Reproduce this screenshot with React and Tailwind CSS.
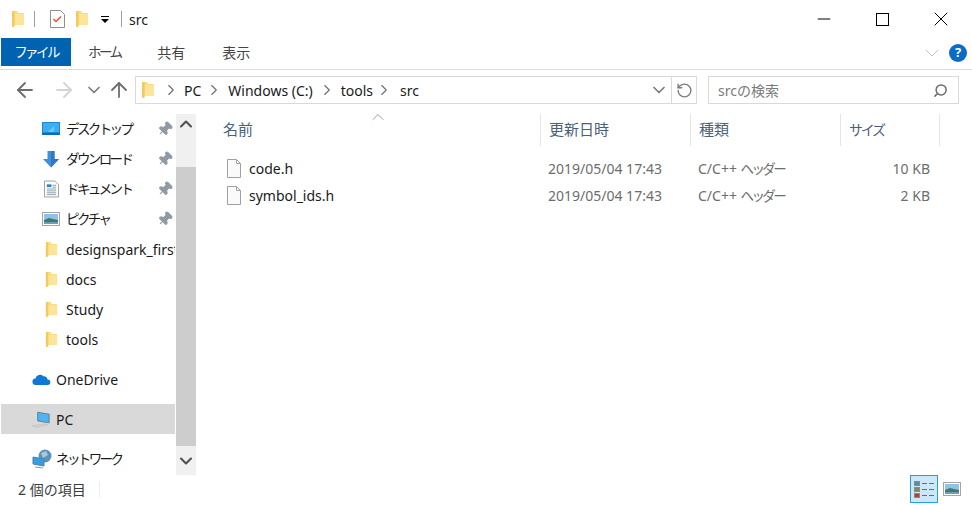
import { ChevronDown, ChevronUp, ChevronRight, ArrowLeft, ArrowRight, ArrowUp, RotateCw, Search, X, Minus, Pin } from "lucide-react";

const FONT = "font-['Noto_Sans','Noto_Sans_CJK_JP',sans-serif]";
// kana in the original font is condensed
const KANA = "text-[13.5px] tracking-[-2.6px]";

function FolderIcon({ className = "" }) {
  return (
    <svg viewBox="0 0 14 18" className={className}>
      <path d="M1 1h5l1 2h6v12H4l-1 2H1z" fill="#fbdc80" />
      <path d="M1 1h2.500v15L1 17z" fill="#f4c95e" />
      <path d="M4 4h9v11H4z" fill="#fde49a" />
    </svg>
  );
}

function FileIcon() {
  return (
    <svg viewBox="0 0 16 19" className="w-4 h-[19px]">
      <path d="M1.500.500h9l4 4v14h-13z" fill="#fafafa" stroke="#a0a0a0" />
      <path d="M10.500.500v4h4" fill="none" stroke="#a0a0a0" />
    </svg>
  );
}

function DesktopIcon() {
  return (
    <svg viewBox="0 0 18 14" className="w-[18px] h-[14px]">
      <rect width="18" height="13" fill="#1e88d8" />
      <path d="M1 1h16v9H1z" fill="#3eaef0" />
      <path d="M6 10l6-6v6z" fill="#6cc6f5" />
      <rect y="11" width="18" height="2" fill="#0f6cb5" />
    </svg>
  );
}

function DownloadIcon() {
  return (
    <svg viewBox="0 0 18 17" className="w-[18px] h-[17px]">
      <path d="M5.500 0h7v8H17l-8 8.500-8-8.500h4.500z" fill="#3f8fdc" />
      <path d="M9 0h3.500v8H17l-8 8.500z" fill="#2f78c4" />
    </svg>
  );
}

function DocumentIcon() {
  return (
    <svg viewBox="0 0 16 18" className="w-[15px] h-[18px]">
      <path d="M.500.500h11l4 4v13H.500z" fill="#fff" stroke="#9a9a9a" />
      <path d="M3 4h5v3H3z" fill="#2a86d0" />
      <path d="M3 9h10M3 11h10M3 13h10M3 15h10M9 5h4M9 7h4" stroke="#8a9aa8" />
    </svg>
  );
}

function PictureIcon() {
  return (
    <svg viewBox="0 0 18 14" className="w-[18px] h-[14px]">
      <rect x=".5" y=".5" width="17" height="13" fill="#fff" stroke="#a4a4a4" />
      <rect x="2" y="2" width="14" height="10" fill="#8fc2e8" />
      <path d="M2 8l5-2 4 1 5 1v4H2z" fill="#3f7a6a" />
      <path d="M2 10h14v2H2z" fill="#6f9fb8" />
    </svg>
  );
}

function CloudIcon() {
  return (
    <svg viewBox="0 0 20 14" className="w-[19px] h-[13px]">
      <path d="M4 13a3.500 3.500 0 0 1-.5-7A5 5 0 0 1 12 3.500 3.800 3.800 0 0 1 16.500 7 3 3 0 0 1 16.500 13z" fill="#0f78d4" />
    </svg>
  );
}

function PcIcon() {
  return (
    <svg viewBox="0 0 22 20" className="w-[22px] h-[20px]">
      <path d="M7 3l12 2v9L7 12z" fill="#4eb4f2" stroke="#5c7f96" />
      <path d="M1 17l13-2 4 1-13 3z" fill="#d0d0d0" stroke="#bcbcbc" strokeWidth=".5" />
    </svg>
  );
}

function NetworkIcon() {
  return (
    <svg viewBox="0 0 20 20" className="w-5 h-5">
      <circle cx="13" cy="7" r="6.500" fill="#5b93bd" />
      <path d="M9 4l5-2 2 4-5 3z" fill="#a9c8dc" />
      <path d="M1 8l11 2v7L1 15z" fill="#2f9fe6" stroke="#5a7f98" />
      <path d="M3 18l8 1" stroke="#8a9aa6" />
    </svg>
  );
}

function CheckDocIcon() {
  return (
    <svg viewBox="0 0 15 18" className="w-[15px] h-[18px]">
      <path d="M.500.500h10l4 4v13H.500z" fill="#fff" stroke="#8f8f8f" />
      <path d="M3.500 9l2.500 2.500 5-5" fill="none" stroke="#e0562a" strokeWidth="1.500" />
    </svg>
  );
}

function QatArrow() {
  return (
    <svg viewBox="0 0 8 7" className="w-2 h-[7px]">
      <path d="M0 0h8v1H0zM0 3h8L4 7z" fill="#000" />
    </svg>
  );
}

function NavRow({ icon, label, pinned, kana, indent = true, selected }) {
  return (
    <div className={`flex items-center h-[30px] ${selected ? "bg-[#d9d9d9]" : ""} ${indent ? "pl-[41px]" : "pl-[30px]"}`}>
      <span className={`flex items-center justify-center shrink-0 ${indent ? "w-[18px] mr-1.5" : "w-[21px] mr-1"}`}>{icon}</span>
      <span className={`text-[#1a1a1a] whitespace-nowrap overflow-hidden flex-1 ${kana ? KANA : "text-[14px]"}`}>{label}</span>
      {pinned && <Pin className="w-4 h-4 mr-[2px] ml-1 text-[#8f9aa3] fill-[#8f9aa3] rotate-45 shrink-0" strokeWidth={1.500} />}
    </div>
  );
}

function FileRow({ name, size }) {
  return (
    <div className="grid grid-cols-[344px_150px_150px_100px] h-[27px] items-center text-[14px] text-[#6d6d6d]">
      <div className="flex items-center pl-[30px] gap-[7px]">
        <FileIcon />
        <span className="text-[#1a1a1a]">{name}</span>
      </div>
      <span className="pl-2">2019/05/04 17:43</span>
      <span className="pl-2 whitespace-nowrap">C/C++ <span className={KANA}>ヘッダー</span></span>
      <span className="text-right pr-2.5">{size}</span>
    </div>
  );
}

export default function App() {
  return (
    <div className={`w-[972px] h-[505px] bg-white flex flex-col overflow-hidden ${FONT}`}>
      {/* title bar */}
      <div className="h-[38px] flex items-center shrink-0">
        <FolderIcon className="w-3.5 h-[18px] ml-[11px]" />
        <div className="w-px h-4 bg-[#a0a0a0] ml-[9px]" />
        <div className="ml-[15px] flex"><CheckDocIcon /></div>
        <FolderIcon className="w-3.5 h-[18px] ml-[10px]" />
        <div className="ml-[12px] flex"><QatArrow /></div>
        <div className="w-px h-4 bg-[#a0a0a0] ml-[12px]" />
        <span className="ml-[7px] text-[14px] text-[#1a1a1a]">src</span>
        <div className="ml-auto flex items-center">
          <Minus className="w-5 h-5 mr-[42px] text-black" strokeWidth={1.300} />
          <div className="w-[13px] h-[13px] border border-black mr-[40px]" />
          <X className="w-6 h-6 mr-[19px] text-black" strokeWidth={1} />
        </div>
      </div>

      {/* ribbon tabs */}
      <div className="h-[32px] shrink-0 flex items-start border-b border-[#dadbdc] text-[14px] text-[#444444] pl-px">
        <div className={`w-[70px] h-[28px] bg-[#0063b1] text-white flex items-center justify-center ${KANA}`}>ファイル</div>
        <span className={`ml-[17px] h-[28px] flex items-center ${KANA}`}>ホーム</span>
        <span className="ml-[37px] h-[28px] flex items-center">共有</span>
        <span className="ml-[37px] h-[28px] flex items-center">表示</span>
        <div className="ml-auto h-[28px] mt-px flex items-center pr-[5px]">
          <ChevronDown className="w-6 h-6 text-[#c0c0c0] mr-[5px]" strokeWidth={1} />
          <div className="w-[18px] h-[18px] rounded-full bg-[#0a6cc4] text-white text-[13px] font-bold flex items-center justify-center">?</div>
        </div>
      </div>

      {/* address bar */}
      <div className="h-[40px] shrink-0 flex items-center text-[14px]">
        <ArrowLeft className="w-6 h-6 ml-[13px] text-[#6d6d6d]" strokeWidth={1.800} />
        <ArrowRight className="w-6 h-6 ml-[15px] text-[#d4d4d4]" strokeWidth={1.800} />
        <ChevronDown className="w-5 h-5 ml-[8px] text-[#7a7a7a]" strokeWidth={2} />
        <ArrowUp className="w-6 h-6 ml-[3px] text-[#6d6d6d]" strokeWidth={1.800} />
        <div className="ml-[4px] w-[562px] h-[28px] border border-[#d9d9d9] flex items-center text-[#1a1a1a]">
          <FolderIcon className="w-3.5 h-[18px] ml-[5px]" />
          <ChevronRight className="w-[18px] h-[18px] ml-[7px] text-[#6d6d6d]" strokeWidth={1.500} />
          <span className="ml-[4px]">PC</span>
          <ChevronRight className="w-[18px] h-[18px] ml-[4px] text-[#6d6d6d]" strokeWidth={1.500} />
          <span className="ml-[5px]">Windows (C:)</span>
          <ChevronRight className="w-[18px] h-[18px] ml-[5px] text-[#6d6d6d]" strokeWidth={1.500} />
          <span className="ml-[5px]">tools</span>
          <ChevronRight className="w-[18px] h-[18px] ml-[2px] text-[#6d6d6d]" strokeWidth={1.500} />
          <span className="ml-[7px]">src</span>
          <div className="ml-auto flex items-center h-full">
            <ChevronDown className="w-5 h-5 mr-[2px] text-[#7a7a7a]" strokeWidth={2} />
            <div className="w-px h-full bg-[#d9d9d9]" />
            <RotateCw className="w-[17px] h-[17px] ml-[4px] mr-[3px] text-[#7d7d7d] -scale-x-100" strokeWidth={2} />
          </div>
        </div>
        <div className="ml-[11px] w-[251px] h-[28px] border border-[#d9d9d9] flex items-center pl-[9px] pr-[10px] text-[#7a7a7a]">
          <span>srcの検索</span>
          <Search className="w-[15px] h-[15px] ml-auto text-[#6d6d6d] -scale-x-100" strokeWidth={2.400} />
        </div>
      </div>

      {/* body */}
      <div className="flex flex-1 min-h-0 pt-[4px]">
        <div className="w-[174px] ml-px shrink-0 overflow-hidden">
          <NavRow icon={<DesktopIcon />} label="デスクトップ" kana pinned />
          <NavRow icon={<DownloadIcon />} label="ダウンロード" kana pinned />
          <NavRow icon={<DocumentIcon />} label="ドキュメント" kana pinned />
          <NavRow icon={<PictureIcon />} label="ピクチャ" kana pinned />
          <NavRow icon={<FolderIcon className="w-[13px] h-[17px]" />} label="designspark_first" />
          <NavRow icon={<FolderIcon className="w-[13px] h-[17px]" />} label="docs" />
          <NavRow icon={<FolderIcon className="w-[13px] h-[17px]" />} label="Study" />
          <NavRow icon={<FolderIcon className="w-[13px] h-[17px]" />} label="tools" />
          <div className="h-[10px]" />
          <NavRow icon={<CloudIcon />} label="OneDrive" indent={false} />
          <div className="h-[10px]" />
          <NavRow icon={<PcIcon />} label="PC" indent={false} selected />
          <div className="h-[10px]" />
          <NavRow icon={<NetworkIcon />} label="ネットワーク" kana indent={false} />
        </div>

        {/* nav scrollbar */}
        <div className="w-[20px] bg-[#f0f0f0] shrink-0 ml-px flex flex-col">
          <div className="h-[53px] flex justify-center">
            <ChevronUp className="w-5 h-5 text-[#505050]" strokeWidth={2.500} />
          </div>
          <div className="flex-1 bg-[#cdcdcd]" />
          <div className="h-[29px] flex items-center justify-center">
            <ChevronDown className="w-5 h-5 text-[#505050]" strokeWidth={2.500} />
          </div>
        </div>

        {/* file list */}
        <div className="flex-1 min-w-0">
          <div className="grid grid-cols-[344px_150px_150px_100px] h-[32px] text-[15px] text-[#4c607a] relative">
            <span className="pl-[27px] pb-px flex items-center">名前</span>
            <span className="pl-2 pb-px flex items-center border-l border-[#e5e5e5]">更新日時</span>
            <span className="pl-2 pb-px flex items-center border-l border-[#e5e5e5]">種類</span>
            <span className="pl-2 pb-px flex items-center border-x border-[#e5e5e5]">
              <span className="text-[14px] tracking-[-2.300px]">サイズ</span>
            </span>
            <ChevronUp className="absolute left-[172px] -top-[7px] w-5 h-5 text-[#8a8a8a]" strokeWidth={1} />
          </div>
          <div className="pt-[9px]">
            <FileRow name="code.h" size="10 KB" />
            <FileRow name="symbol_ids.h" size="2 KB" />
          </div>
        </div>
      </div>

      {/* status bar */}
      <div className="h-[30px] shrink-0 flex items-center pb-[2px] text-[14px] text-[#3c3c3c]">
        <span className="ml-[18px]">2 個の項目</span>
        <div className="w-px h-4 bg-[#eeeeee] ml-[13px]" />
        <div className="ml-auto flex items-center pr-[11px]">
          <div className="w-[28px] h-[28px] bg-[#cce8f8] border border-[#26a0da] flex flex-col items-center justify-center gap-[1px]">
            {["#4f8f9f", "#7f8f4f", "#c0392b"].map((c) => (
              <div key={c} className="flex items-center gap-[2px]">
                <div className="w-[6px] h-[5px] border border-[#8a8a8a]" style={{ backgroundColor: c }} />
                <div className="w-[5px] h-px bg-[#6d6d6d]" />
                <div className="w-[5px] h-px bg-[#6d6d6d]" />
              </div>
            ))}
          </div>
          <div className="ml-[5px]"><PictureIcon /></div>
        </div>
      </div>
    </div>
  );
}
